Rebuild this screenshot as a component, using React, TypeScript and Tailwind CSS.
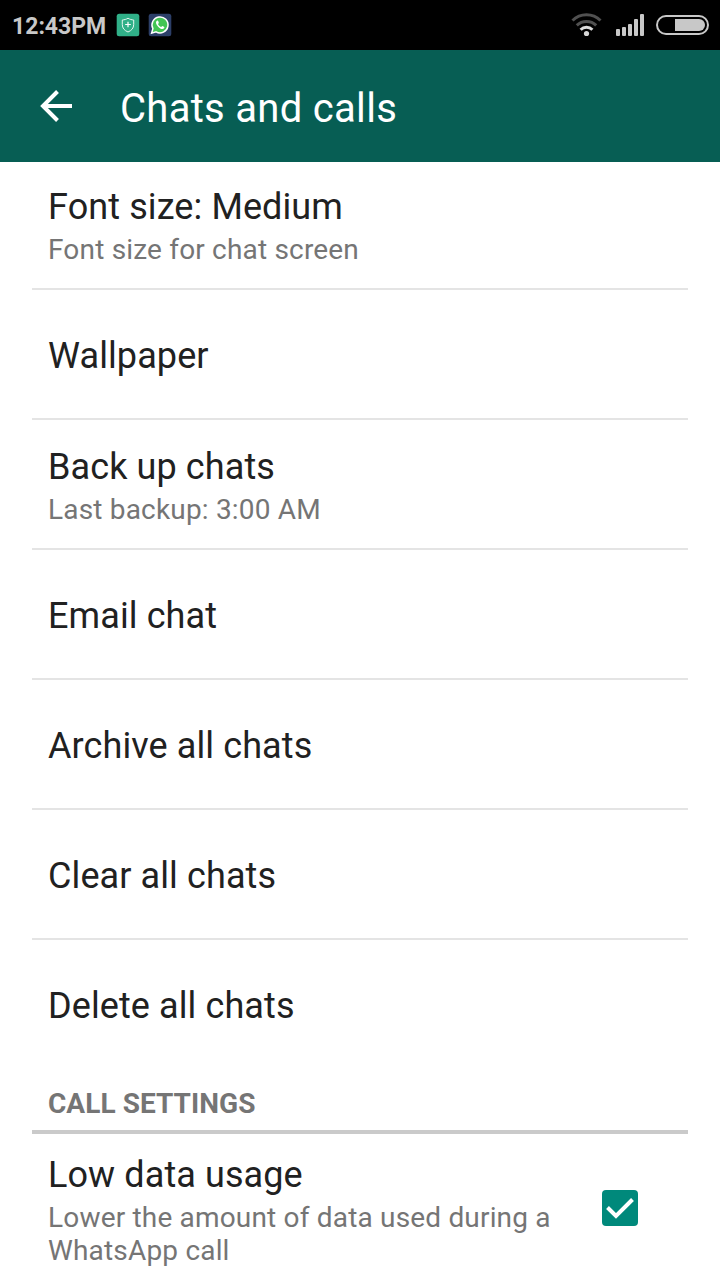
import type { ReactNode } from "react";

type RowProps = {
  title: string;
  subtitle?: string;
  last?: boolean;
};

function StatusBar() {
  return (
    <div className="flex h-[50px] items-center justify-between bg-black pl-3 pr-[11px]">
      <div className="flex items-center">
        <span className="w-[104px] whitespace-nowrap pt-1 text-[23px] font-bold leading-[30px] text-[#c8c8c8]">
          12:43PM
        </span>
        <svg className="size-6" viewBox="0 0 24 24" fill="none">
          <rect x="0.7" y="0.7" width="22.6" height="22.6" rx="2.5" fill="#30b088" />
          <path
            d="M12 5.2c1.8 1.2 3.6 1.6 5.7 1.8v4.5c0 3.6-2 6-5.700 7.500-3.700-1.500-5.700-3.900-5.700-7.500V7c2.100-.2 3.900-.6 5.700-1.800z"
            stroke="#e6f7f1"
            strokeWidth="1"
          />
          <path d="M12 8.700v5.600M9.200 11.500h5.600" stroke="#fff" strokeWidth="1.200" />
        </svg>
        <svg className="ml-2 size-6" viewBox="0 0 24 24" fill="none">
          <rect x="0.7" y="0.7" width="22.6" height="22.6" rx="2.5" fill="#2c3f68" />
          <path d="M3.600 20.200l1.300-4.600a8 8 0 1 1 3.200 3.300z" fill="#43c554" stroke="#fff" strokeWidth="1.500" />
          <path
            d="M9.300 7.600c-2.300 1.200-1.200 4 .9 6.200s4.900 3.300 6 1.200c.3-.7.200-1-.3-1.300l-1.500-.8-1.300 1.100c-1.500-.6-2.500-1.600-3.100-2.900l.9-1.100-.7-1.900c-.2-.4-.5-.6-.9-.5z"
            fill="#fff"
          />
        </svg>
      </div>
      <div className="flex items-center">
        <svg className="h-6 w-8" viewBox="0 0 32 24" fill="none" stroke="#505050" strokeWidth="3">
          <path d="M1.500 7.500a20 20 0 0 1 28 0" />
          <path d="M5.800 12.300a14 14 0 0 1 19.400 0" />
          <path d="M9.600 16.700a8.400 8.400 0 0 1 11.800 0" stroke="#dcdcdc" />
          <circle cx="15.5" cy="20.500" r="2.600" fill="#d6d6d6" stroke="none" />
        </svg>
        <svg className="ml-[13px] h-6 w-7" viewBox="0 0 28 24" fill="#c8c8c8">
          <rect x="0" y="16" width="4" height="7" rx="1" />
          <rect x="6" y="14" width="4" height="9" rx="1" />
          <rect x="12" y="11" width="4" height="12" rx="1" />
          <rect x="18" y="6" width="4" height="17" rx="1" />
          <rect x="24" y="1" width="4" height="22" rx="1" />
        </svg>
        <svg className="ml-3 h-5 w-[53px]" viewBox="0 0 53 20">
          <rect x="1" y="1" width="51" height="18" rx="9" fill="none" stroke="#c8c8c8" strokeWidth="2" />
          <path d="M19 4h24a6 6 0 0 1 0 12H19z" fill="#c8c8c8" />
        </svg>
      </div>
    </div>
  );
}

function Header() {
  return (
    <header className="flex h-28 items-center bg-[#075e54] pl-10">
      <svg className="size-8" viewBox="0 0 32 32" fill="none" stroke="#fff" strokeWidth="4">
        <path d="M32 16H4M17.500 1.500L3 16l14.500 14.500" />
      </svg>
      <h1 className="ml-12 pt-1.5 text-[40px] leading-[48px] tracking-[0.3px] text-white">
        Chats and calls
      </h1>
    </header>
  );
}

function Label({ children }: { children: ReactNode }) {
  return (
    <div className="text-[36px] leading-[44px] tracking-[0.1px] text-[#212121]">{children}</div>
  );
}

function Summary({ children }: { children: ReactNode }) {
  return (
    <div className="mt-1 text-[28px] leading-[33px] tracking-[0.18px] text-[#757575]">
      {children}
    </div>
  );
}

function Row({ title, subtitle, last }: RowProps) {
  return (
    <div
      className={`flex h-[130px] flex-col justify-center px-4 ${subtitle || last ? "pt-0.5" : "pt-1"} ${last ? "" : "border-b-2 border-[#e4e4e4]"}`}
    >
      <Label>{title}</Label>
      {subtitle && <Summary>{subtitle}</Summary>}
    </div>
  );
}

export default function App() {
  return (
    <div
      className="h-[1280px] w-[720px] overflow-hidden bg-white"
      style={{ fontFamily: "Roboto, sans-serif" }}
    >
      <StatusBar />
      <Header />
      <main className="px-8">
        <div className="-mt-0.5">
          <Row title="Font size: Medium" subtitle="Font size for chat screen" />
          <Row title="Wallpaper" />
          <Row title="Back up chats" subtitle="Last backup: 3:00 AM" />
          <Row title="Email chat" />
          <Row title="Archive all chats" />
          <Row title="Clear all chats" />
          <Row title="Delete all chats" last />
        </div>
        <h2 className="h-[64px] border-b-4 border-[#cacaca] px-4 pt-[17px] text-[28px] font-bold leading-[34px] tracking-[0.05px] text-[#757575]">
          CALL SETTINGS
        </h2>
        <div className="flex items-center justify-between pl-4 pr-[50px] pt-[19px]">
          <div className="w-[520px]">
            <Label>Low data usage</Label>
            <Summary>Lower the amount of data used during a WhatsApp call</Summary>
          </div>
          <svg className="mb-1 size-9 shrink-0" viewBox="0 0 36 36" fill="none">
            <rect width="36" height="36" rx="4" fill="#00897b" />
            <path d="M5.500 17.500l8.500 8.500L30.500 9.500" stroke="#fff" strokeWidth="4" />
          </svg>
        </div>
      </main>
    </div>
  );
}
